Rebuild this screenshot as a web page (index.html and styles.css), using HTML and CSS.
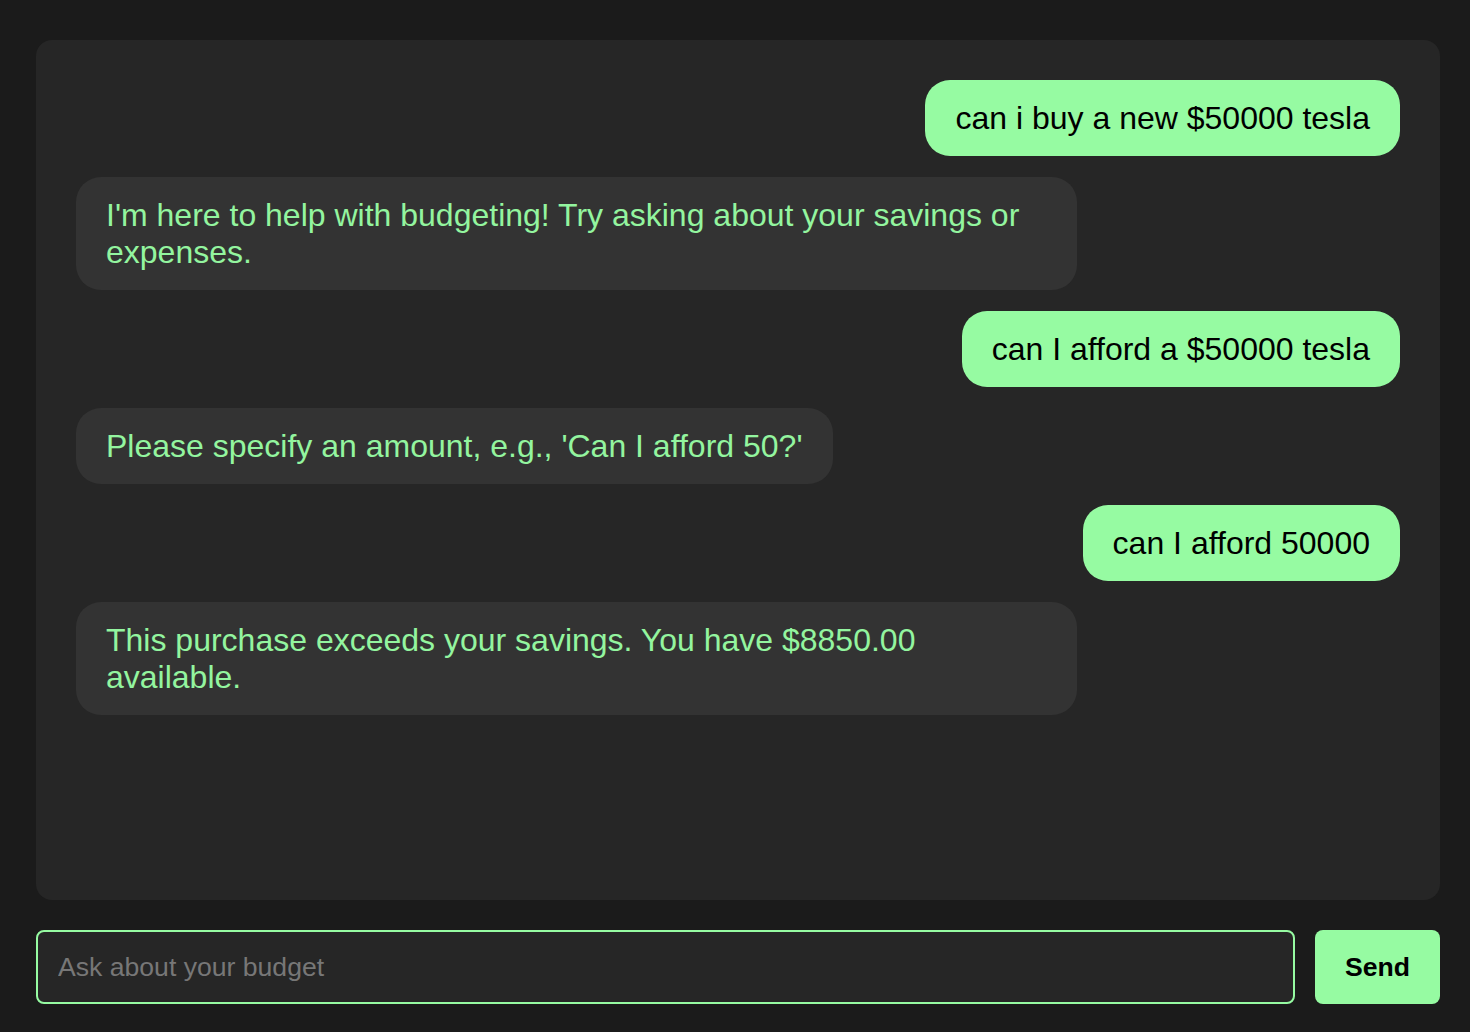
FILE: index.html
```html
<!DOCTYPE html>
<html lang="en">
<head>
<meta charset="utf-8">
<title>Budget Chat</title>
<link rel="stylesheet" href="styles.css">
</head>
<body>
<div class="app">
  <div class="chat">
    <div class="msg user">can i buy a new $50000 tesla</div>
    <div class="msg bot">I'm here to help with budgeting! Try asking about your savings or expenses.</div>
    <div class="msg user">can I afford a $50000 tesla</div>
    <div class="msg bot">Please specify an amount, e.g., 'Can I afford 50?'</div>
    <div class="msg user">can I afford 50000</div>
    <div class="msg bot">This purchase exceeds your savings. You have $8850.00 available.</div>
  </div>
  <form class="composer">
    <input class="field" type="text" placeholder="Ask about your budget">
    <button class="send" type="button">Send</button>
  </form>
</div>
</body>
</html>
```
FILE: styles.css
```css
* { box-sizing: border-box; }
html, body { margin: 0; height: 100%; }
body {
  background: #1b1b1b;
  font-family: "Liberation Sans", Arial, Helvetica, sans-serif;
  color: #98fb98;
}
.app {
  height: 100vh;
  display: flex;
  flex-direction: column;
  gap: 30px;
  padding: 40px 30px 28px 36px;
}
.chat {
  flex: 1;
  background: #262626;
  border-radius: 16px;
  padding: 40px;
  display: flex;
  flex-direction: column;
  align-items: flex-start;
  gap: 21px;
  overflow: hidden;
}
.msg {
  font-size: 32px;
  line-height: 37px;
  padding: 19.5px 30px;
  border-radius: 25px;
  max-width: 1001px;
}
.user {
  align-self: flex-end;
  background: #96fba2;
  color: #000;
}
.bot {
  background: #333333;
  color: #93f59f;
}
.composer {
  display: flex;
  gap: 20px;
  height: 74px;
  margin: 0;
}
.field {
  flex: 1;
  background: #262626;
  border: 2px solid #96fba2;
  border-radius: 8px;
  padding: 0 20px;
  font-family: "Liberation Sans", Arial, Helvetica, sans-serif;
  font-size: 26.6px;
  color: #ddd;
  outline: none;
}
.field::placeholder { color: #777777; }
.send {
  width: 125px;
  background: #96fba2;
  border: none;
  border-radius: 8px;
  font-family: "Liberation Sans", Arial, Helvetica, sans-serif;
  font-size: 26.6px;
  font-weight: bold;
  color: #000;
  padding: 0;
}
```
